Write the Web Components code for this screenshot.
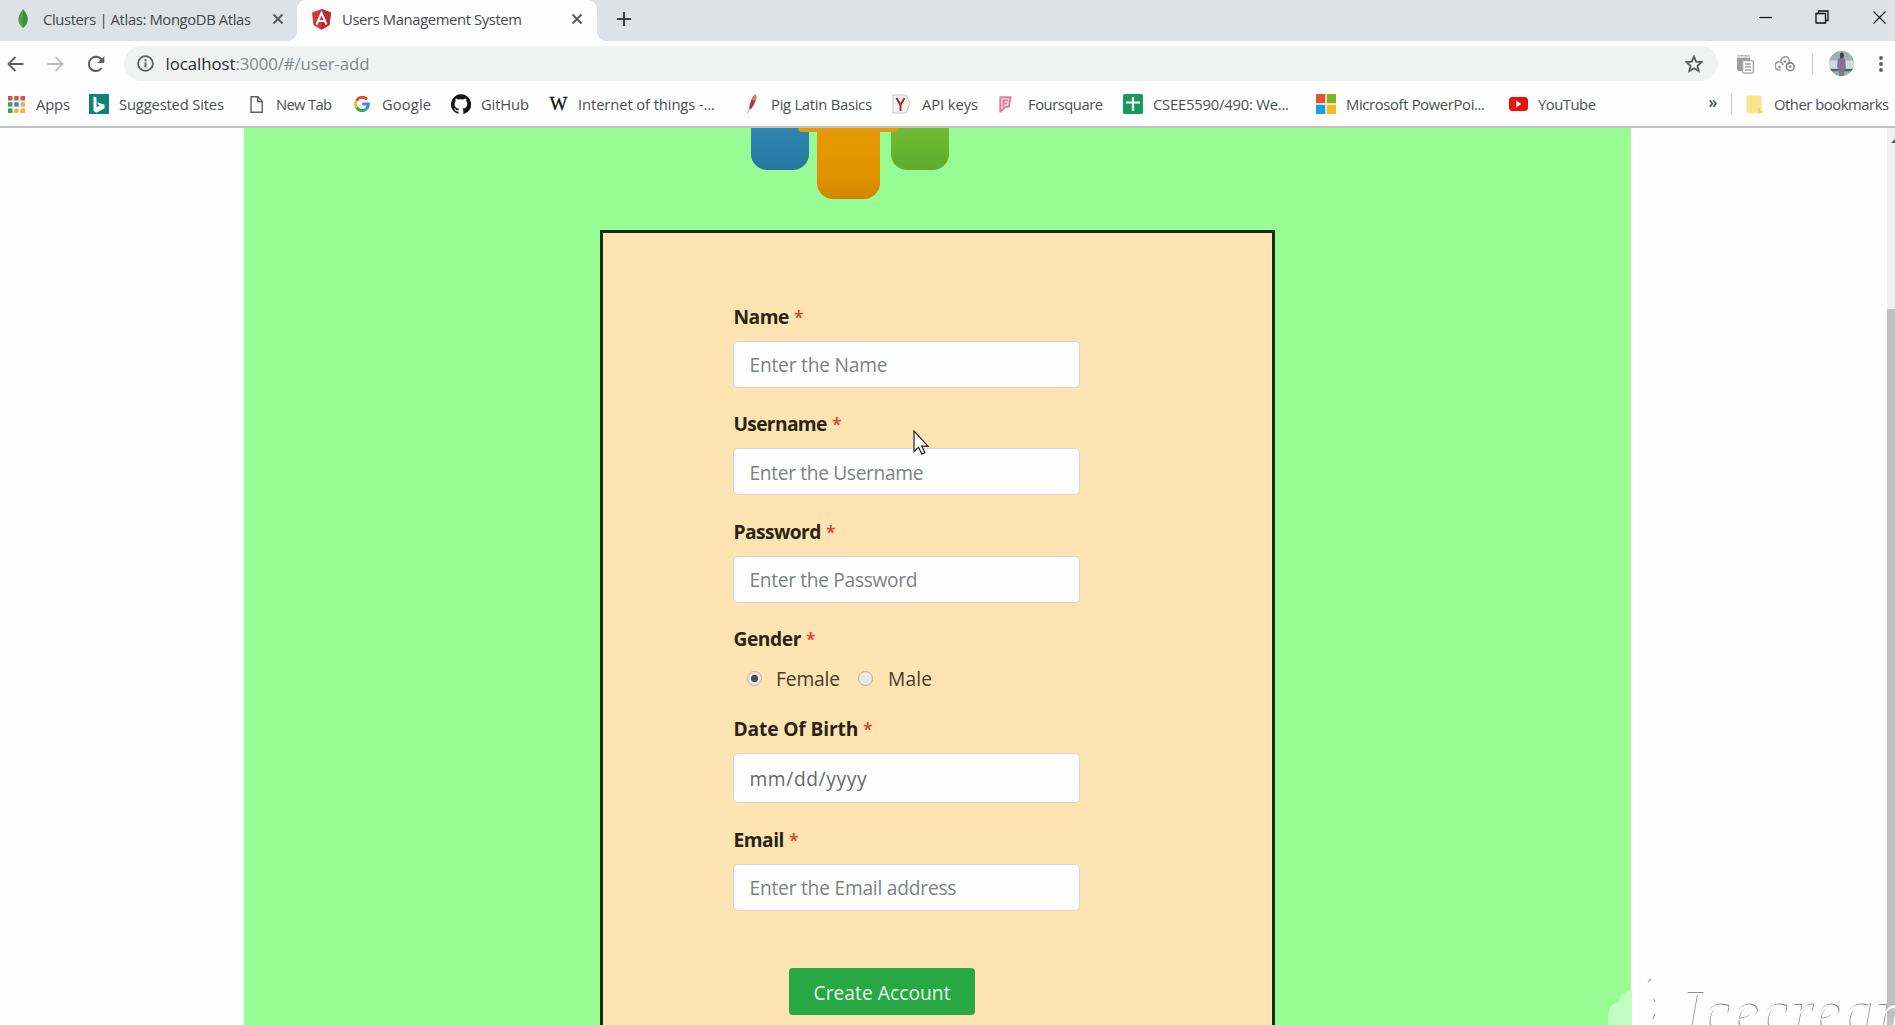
<!DOCTYPE html>
<html lang="en">
<head>
<meta charset="utf-8">
<title>Users Management System</title>
<style>
html,body{margin:0;height:100%;overflow:hidden;background:#fefefe;font-family:"Open Sans","Noto Sans",sans-serif;color:#4b4d50}
browser-window{height:1025px}
</style>
</head>
<body>
<browser-window></browser-window>
<script>
const define = (name, html, ready) => customElements.define(name, class extends HTMLElement {
  connectedCallback() {
    if (this.shadowRoot) return;
    const root = this.attachShadow({ mode: 'open' });
    const t = document.createElement('template');
    t.innerHTML = typeof html === 'function' ? html(this) : html;
    root.append(t.content.cloneNode(true));
    if (ready) ready(this, root);
  }
});

/* A single text line tracked to an exact width (attribute w). */
define('fit-text', el => `<style>
:host{display:block;white-space:pre;width:${el.getAttribute('w')}px;flex:none}
span{display:inline-block;white-space:pre}
</style><span><slot></slot></span>`, (el, root) => {
  const s = root.querySelector('span');
  const n = el.textContent.length;
  const fit = () => {
    s.style.letterSpacing = '0';
    const nat = s.getBoundingClientRect().width;
    s.style.letterSpacing = ((+el.getAttribute('w') - nat) / Math.max(1, n - 1)).toFixed(3) + 'px';
  };
  fit();
  document.fonts.ready.then(fit);
});

const ICONS = {
  leaf: [10,20,`<path d="M5 0C9 5 10 8 9.5 12 9 15 7 17 5 19 3 17 .8 15 .4 12 0 8 2 4 5 0Z" fill="#4aa53f"/><path d="M5 1v18C7 17 9 15 9.5 12 10 8 9 5 5 1Z" fill="#3a8f38"/>`],
  angular: [19,21,`<path d="M9.500 0 19 3.500 17.600 16 9.500 20.800 1.400 16 0 3.500Z" fill="#d8343c"/><path d="M9.500 0 19 3.500 17.600 16 9.500 20.800Z" fill="#b52e31"/><path d="M4.500 15.500 9.500 4l5 11.500M6.500 12h6" fill="none" stroke="#fff" stroke-width="2"/>`],
  close: [12,12,`<path d="M1.500 1.500l9 9M10.500 1.500l-9 9" stroke="#55585b" stroke-width="1.900"/>`],
  plus: [16,16,`<path d="M8 1v14M1 8h14" stroke="#3d4043" stroke-width="2.200"/>`],
  min: [13,13,`<path d="M0 6.500h13" stroke="#111" stroke-width="1.200"/>`],
  max: [14,14,`<path d="M1 3.500h9.500V13H1ZM3.500 3.500V1H13v9.500h-2.500" fill="none" stroke="#111" stroke-width="1.300"/>`],
  wclose: [13,13,`<path d="M.5 .5l12 12M12.500 .5l-12 12" stroke="#111" stroke-width="1.200"/>`],
  back: [17,16,`<path d="M16.500 8H1.500M8.500 1 1.500 8l7 7" fill="none" stroke="#5c5f62" stroke-width="1.900"/>`],
  fwd: [17,16,`<path d="M.5 8h15M8.500 1l7 7-7 7" fill="none" stroke="#babcbe" stroke-width="1.900"/>`],
  reload: [18,18,`<path d="M14.800 13A7.100 7.100 0 1 1 14.500 4.500" fill="none" stroke="#5c5f62" stroke-width="2"/><path d="M17.300 1v7h-7Z" fill="#5c5f62"/>`],
  info: [17,17,`<circle cx="8.500" cy="8.500" r="7.400" fill="none" stroke="#5c5f62" stroke-width="1.800"/><path d="M8.500 7.500v5M8.500 4.200v2" stroke="#5c5f62" stroke-width="2"/>`],
  star: [18,18,`<path d="M9 1.600l2.150 5 5.400.5-4.100 3.600 1.200 5.300L9 13.200 4.350 16l1.200-5.300L1.450 7.100l5.400-.5Z" fill="none" stroke="#55585b" stroke-width="1.800"/>`],
  copy: [18,20,`<path d="M1 3.200Q1 1 3 1h9q2 0 2 2v3H8Q6 6 6 8v9H3q-2 0-2-2Z" fill="#9b9e9e"/><path d="M1 3h13" stroke="#fff" stroke-width="1.200"/><path d="M4 0v2M8 0v2M11 0v2" stroke="#fefefe"/><rect x="6.600" y="6.600" width="10.800" height="12.600" rx="1.500" fill="#fff" stroke="#a2a4a4" stroke-width="1.300"/><path d="M9 10h6M9 13h6M9 16h6" stroke="#a2a4a4" stroke-width="1.500"/>`],
  gears: [20,16,`<g fill="none" stroke="#9a9c9d" stroke-width="1.700"><path d="M5.500 13.500A4 4 0 1 1 8 9"/><path d="M6 5.500A4.200 4.200 0 1 1 12.500 8.500" /><circle cx="15.200" cy="10.700" r="3.900" stroke="#858788"/></g><g fill="#8b8d8e"><circle cx="4.500" cy="11" r="1.300"/><circle cx="9.800" cy="5.500" r="1.300"/><circle cx="15.200" cy="10.700" r="1.400"/></g>`],
  avatar: [25,25,`<defs><clipPath id="c"><circle cx="12.500" cy="12.500" r="12.500"/></clipPath></defs><g clip-path="url(#c)"><path d="M0 0h25v25H0Z" fill="#b9c4c2"/><path d="M0 0h25v9H0Z" fill="#a3b0ad"/><path d="M0 10h25v7H0Z" fill="#d3dad9"/><path d="M0 18h25v2.500H0Z" fill="#3f6e5c"/><path d="M0 20.500h25V25H0Z" fill="#9db0a6"/><path d="M9 8q3.500-2.500 7 0l1 9-1.500 1-.5 7h-5l-.5-7L8 16Z" fill="#83748f"/><ellipse cx="12.800" cy="4.500" rx="2" ry="2.900" fill="#443b45"/></g>`],
  dots: [4,16,`<g fill="#5c5f62"><circle cx="2" cy="2" r="1.900"/><circle cx="2" cy="8" r="1.900"/><circle cx="2" cy="14" r="1.900"/></g>`],
  apps: [17,17,`<g fill="#d2564c"><path d="M0 0h4.500v4.500H0Z"/><path d="M6.200 0h4.500v4.500H6.200Z"/><path d="M12.400 0H17v4.500h-4.600Z"/></g><path d="M0 6.200h4.500v4.500H0Z" fill="#4a9a67"/><path d="M6.200 6.200h4.500v4.500H6.200Z" fill="#3f86d4"/><path d="M12.400 6.200H17v4.500h-4.600Z" fill="#e5b64a"/><path d="M0 12.400h4.500V17H0Z" fill="#4a9a67"/><path d="M6.200 12.400h4.500V17H6.200ZM12.400 12.400H17V17h-4.600Z" fill="#e5b64a"/>`],
  bing: [20,20,`<path d="M0 0h20v20H0Z" fill="#118078"/><path d="M4.500 2.500l3 1v9.800l3.200-1.800-1.500-.8-1-2.500 7.300 2.500v3.500l-8 4.500-3-1.800Z" fill="#fff"/>`],
  page: [13,17,`<path d="M1 .8h6.800L12.200 5.200v11H1ZM7.600 1v4.500h4.500" fill="none" stroke="#5b5e60" stroke-width="1.400"/>`],
  google: [16,16,`<g fill="none" stroke-width="3"><path d="M13 3.400A6.400 6.400 0 0 0 2.500 4.700" stroke="#e54b3c"/><path d="M2.500 4.700a6.400 6.400 0 0 0 0 6.600" stroke="#f4b92a"/><path d="M2.500 11.300a6.400 6.400 0 0 0 9.500 1.900" stroke="#3aa757"/><path d="M12 13.200a6.300 6.300 0 0 0 2.400-5.200H8.200" stroke="#4486ee"/></g>`],
  github: [20,20,`<path fill="#151515" d="M10 .3a10 10 0 0 0-3.200 19.500c.5.100.7-.2.700-.5v-1.900c-2.800.6-3.400-1.200-3.400-1.200-.4-1.100-1.100-1.400-1.100-1.400-.9-.6.1-.6.1-.6 1 .1 1.500 1 1.500 1 .9 1.600 2.400 1.100 2.900.9.100-.7.400-1.100.7-1.300-2.200-.3-4.600-1.100-4.600-5 0-1.100.4-2 1-2.700-.1-.3-.4-1.300.1-2.600 0 0 .8-.3 2.700 1a9.500 9.500 0 0 1 5 0c1.900-1.300 2.700-1 2.700-1 .5 1.300.2 2.300.1 2.600.6.700 1 1.600 1 2.700 0 3.900-2.400 4.700-4.600 5 .4.300.7.900.7 1.900v2.700c0 .3.200.6.700.5A10 10 0 0 0 10 .3Z"/>`],
  feather: [11,20,`<path d="M9.500 0.500q2 3-1 9T3.500 15.500q-1-3 1.500-9T9.500.5Z" fill="#b8394f"/><path d="M9.500.5q2 2 0 6.500L6 5.500Q7.500 1.500 9.500.5Z" fill="#e0883a"/><path d="M4.500 10l-1 5.500 3-2.500Z" fill="#7c3a78"/><path d="M3.500 15L.8 19.500" stroke="#b9a0b4"/>`],
  yahoo: [19,20,`<path d="M1 1h13l4.300 8L14 19H1Z" fill="#f5f3f2" stroke="#c9c7c5" stroke-width="1.100"/><path d="M4.500 4l4 7V17M12.500 4l-4 7" fill="none" stroke="#b3262d" stroke-width="2"/>`],
  four: [13,17,`<path d="M1.300 1.300h10.200l-1.700 9.500H6.600L1.300 15.800Z" fill="#fbdce6" stroke="#e8799b" stroke-width="1.900" stroke-linejoin="round"/><path d="M9 4.300H4.500v6M4.500 7.300H8" stroke="#e8799b" stroke-width="1.800" fill="none"/>`],
  sheets: [20,20,`<rect width="20" height="20" rx="1.800" fill="#16995a"/><path d="M10 3v14M3 8.500h14" stroke="#fff" stroke-width="2.200"/>`],
  ms: [20,20,`<path d="M0 0h9.300v9.300H0Z" fill="#e5532c"/><path d="M10.700 0H20v9.300h-9.300Z" fill="#80b41a"/><path d="M0 10.700h9.300V20H0Z" fill="#17a0de"/><path d="M10.700 10.700H20V20h-9.300Z" fill="#f3be1c"/>`],
  yt: [19,14,`<rect width="19" height="14" rx="3.500" fill="#e8120c"/><path d="M7.200 3.800v6.400L12.500 7Z" fill="#fff"/>`],
  folder: [17,19,`<path d="M2 .5h12q1.500 0 1.500 1.500v10l1 5-2 1.500H2Q.5 18.500.5 17V2Q.5.5 2 .5Z" fill="#fae38b"/><path d="M13 13v4h3.500" fill="none" stroke="#e6c45f" stroke-width="1.200"/>`],
  cursor: [17,26,`<path d="M1 1v20.500l4.500-4.200 3.400 6.800 3-1.400-3.200-6.600H15Z" fill="#fff" stroke="#222" stroke-width="1.200"/>`]
};
define('ui-icon', el => {
  const [w, h, body] = ICONS[el.getAttribute('name')];
  return `<style>:host{display:block;flex:none;width:${w}px;height:${h}px}svg{display:block}</style><svg width="${w}" height="${h}" viewBox="0 0 ${w} ${h}">${body}</svg>`;
});

define('tab-strip', `<style>
:host{display:flex;height:41px;background:#dee1e5;color:#45484b;font-size:14.800px;line-height:22px}
.t{display:flex;align-items:center;box-sizing:border-box;padding-bottom:3px;flex:none}
.one{width:297px;padding-left:18px}
.one fit-text{margin-left:15px}.one ui-icon:last-child{margin-left:21px}
.two{width:300px;padding-left:15px;background:#fefefe;border-radius:9px 9px 0 0;color:#45484b;position:relative}
.two:before,.two:after{content:"";position:absolute;bottom:0;width:9px;height:9px}
.two:before{left:-9px;background:radial-gradient(circle at 0 0,transparent 8.500px,#fefefe 9px)}
.two:after{right:-9px;background:radial-gradient(circle at 100% 0,transparent 8.500px,#fefefe 9px)}
.two fit-text{margin-left:11px}.two ui-icon:last-child{margin-left:49px}
.add{padding-left:19px}
.win{margin-left:auto;gap:43px;padding:0 9px 7px 0}
.win ui-icon+ui-icon+ui-icon{margin-left:1px}
</style>
<div class="t one"><ui-icon name="leaf"></ui-icon><fit-text w="208">Clusters | Atlas: MongoDB Atlas</fit-text><ui-icon name="close"></ui-icon></div>
<div class="t two"><ui-icon name="angular"></ui-icon><fit-text w="180">Users Management System</fit-text><ui-icon name="close"></ui-icon></div>
<div class="t add"><ui-icon name="plus"></ui-icon></div>
<div class="t win"><ui-icon name="min"></ui-icon><ui-icon name="max"></ui-icon><ui-icon name="wclose"></ui-icon></div>`);

define('tool-bar', `<style>
:host{display:flex;height:45px;align-items:center;padding:0 12.500px 0 7px;box-sizing:border-box;background:#fefefe}
ui-icon.f{margin-left:23px}ui-icon.r{margin:0 19px 0 22.500px}
.omni{flex:1;height:35px;border-radius:18px;background:#f0f2f2;display:flex;align-items:center;padding:0 15px 0 13px;font-size:16.800px;line-height:24px;color:#858889}
.omni fit-text:nth-of-type(1){margin-left:12px;color:#26282a}
.omni ui-icon:last-child{margin-left:auto}
.a{margin-left:18.500px}.b{margin-left:21px}
i{width:1px;height:20px;background:#c6c8c9;margin:0 15.500px 0 17px}
.d{margin-left:25px}
</style>
<ui-icon name="back"></ui-icon><ui-icon name="fwd" class="f"></ui-icon><ui-icon name="reload" class="r"></ui-icon>
<div class="omni"><ui-icon name="info"></ui-icon><fit-text w="70">localhost</fit-text><fit-text w="134">:3000/#/user-add</fit-text><ui-icon name="star"></ui-icon></div>
<ui-icon name="copy" class="a"></ui-icon><ui-icon name="gears" class="b"></ui-icon><i></i><ui-icon name="avatar"></ui-icon><ui-icon name="dots" class="d"></ui-icon>`);

define('bookmark-item', el => {
  const g = k => el.getAttribute(k);
  return `<style>:host{display:flex;align-items:center;flex:none;margin-left:${g('before')}px}
fit-text{margin-left:${g('gap')}px}
b{font:400 19px/20px "Liberation Serif",serif;color:#111;width:19px;text-align:center;-webkit-text-stroke:.3px #111}</style>
${g('icon') === 'wiki' ? '<b>W</b>' : `<ui-icon name="${g('icon')}"></ui-icon>`}<fit-text w="${g('w')}">${el.dataset.label}</fit-text>`;
});

const MARKS = [
  ['apps',8,11,'Apps',34],['bing',19,10,'Suggested Sites',105],['page',26,13,'New Tab',56],
  ['google',22,12,'Google',49],['github',20,10,'GitHub',48],['wiki',20,10,'Internet of things -...',137],
  ['feather',31,14,'Pig Latin Basics',101],['yahoo',20,11,'API keys',56],['four',21,16,'Foursquare',75],
  ['sheets',20,10,'CSEE5590/490: We...',136],['ms',27,10,'Microsoft PowerPoi...',139],['yt',24,10,'YouTube',58]
];
define('bookmark-bar', () => `<style>
:host{display:flex;height:42px;box-sizing:border-box;padding:0 6px 4px 0;align-items:center;background:#fefefe;border-bottom:2px solid #bfc2c1;font-size:14.800px;line-height:22px;color:#4b4e50}
.more{margin-left:auto;font-size:16px;font-weight:600;margin-top:-4px}
i{width:1px;height:20px;background:#c6c8c9;margin-left:13px}
</style>${MARKS.map(m => `<bookmark-item icon="${m[0]}" before="${m[1]}" gap="${m[2]}" data-label="${m[3]}" w="${m[4]}"></bookmark-item>`).join('')}
<fit-text class="more" w="9">»</fit-text><i></i><bookmark-item icon="folder" before="14" gap="11.5" data-label="Other bookmarks" w="115"></bookmark-item>`);

define('form-label', el => `<style>
:host{display:flex;gap:4.700px;height:39.200px;line-height:30px;font-size:19.200px;font-weight:700;color:#2b2414;padding-left:.4px}
em{font-style:normal;font-weight:600;font-size:17.500px;color:#e23a2c}
</style><fit-text w="${el.getAttribute('w')}">${el.textContent}</fit-text><em>*</em>`);

define('text-field', el => `<style>
:host{display:block;margin-bottom:${el.getAttribute('after') || 21.4}px}
.box{box-sizing:border-box;width:347px;height:${el.getAttribute('h') || 47}px;border:1px solid #d3d8d6;border-radius:5px;background:#fefefe;display:flex;align-items:center;padding:1.500px 0 0 15.500px;font-size:19.200px;line-height:30px;color:${el.getAttribute('ink') || '#7c8283'}}
</style><form-label w="${el.getAttribute('lw')}">${el.getAttribute('label')}</form-label>
<div class="box"><fit-text w="${el.getAttribute('w')}">${el.getAttribute('hint')}</fit-text></div>`);

define('gender-field', `<style>
:host{display:block;margin-bottom:20.800px}
.row{display:flex;align-items:center;height:30px;line-height:30px;font-size:19.200px;color:#453c2b;padding:1.200px 0 0 13.500px;box-sizing:border-box}
i{box-sizing:border-box;width:15px;height:15px;border:1px solid #b3b0a9;border-radius:50%;background:#e9e9e6;margin-bottom:2px;flex:none}
i.on{background:radial-gradient(circle,#4e4e4e 3.300px,#e9e9e6 4px)}
fit-text{margin-left:14.500px}fit-text+i{margin-left:17.500px}
</style><form-label w="68">Gender</form-label>
<div class="row"><i class="on"></i><fit-text w="64">Female</fit-text><i></i><fit-text w="44" style="margin-left:15.500px">Male</fit-text></div>`);

define('account-form', `<style>
:host{display:block;box-sizing:border-box;width:675px;height:860px;margin:0 auto;border:3px solid #12300f;background:#fde4b2;padding:69px 0 0 130px}
.btn{margin:57.500px 0 0 56px;width:186px;height:47px;border-radius:4px;background:#28a745;color:#ecfbe9;display:flex;align-items:center;justify-content:center;font-size:19.200px;line-height:30px;padding-top:2.500px;box-sizing:border-box}
</style>
<text-field label="Name" lw="56" hint="Enter the Name" w="138"></text-field>
<text-field label="Username" lw="94" hint="Enter the Username" w="174"></text-field>
<text-field label="Password" lw="88" hint="Enter the Password" w="168"></text-field>
<gender-field></gender-field>
<text-field label="Date Of Birth" lw="125" hint="mm/dd/yyyy" w="117" h="50" ink="#66696a" after="21.2"></text-field>
<text-field label="Email" lw="51" hint="Enter the Email address" w="207" after="0"></text-field>
<div class="btn"><fit-text w="137">Create Account</fit-text></div>`);

define('team-logo', `<style>
:host{display:flex;align-items:flex-start;height:101.500px;padding-left:507px}
div{border-radius:0 0 16px 16px;flex:none}
.b{width:58px;height:42px;background:linear-gradient(#2f86b0,#2777a0)}
.o{width:63px;height:71px;margin-left:8px;background:linear-gradient(#e69a00,#e09200 70%,#d38500);position:relative}
.o:before{content:"";position:absolute;left:-19px;right:-19px;top:0;height:4px;background:#e39a10;border-radius:0 0 12px 12px}
.g{width:58px;height:42px;margin-left:11px;background:linear-gradient(#72bb31,#5fab30)}
</style><div class="b"></div><div class="o"></div><div class="g"></div>`);

define('cloud-mark', `<style>
:host{display:block}
svg{position:absolute;left:1600px;top:975px}
fit-text{position:absolute;left:1680px;top:982px;font:italic 400 60px/60px "Liberation Serif",serif;color:#fefefe;text-shadow:1px -1.200px 0 #8b8e8c}
</style><svg width="60" height="50"><path d="M8 50V42Q8 29 19 27 21 16 32 15V50Z" fill="#c2fcc0"/><path d="M48 7l3-3M54 24l1 3M55 39l-2 5" stroke="#9fa2a0" stroke-width="1.200"/></svg><fit-text w="238">Icecream</fit-text>`);

define('browser-window', `<style>
:host{display:flex;flex-direction:column;width:1895px;overflow:hidden;position:relative}
.view{flex:1;min-height:0;display:flex;overflow:hidden}
.main{flex:1;padding:0 256px 0 244px;overflow:hidden}
.green{height:1000px;background:#98fc95}
.bar{width:8px;background:#f0f1f0;box-sizing:border-box;padding-top:181px;position:relative}
.bar div{height:720px;background:#bfc2c0}
.bar:before{content:"";position:absolute;right:-4px;top:11px;border:4px solid transparent;border-top:0;border-bottom:4px solid #555}
.cur{position:absolute;left:913px;top:430px}
</style>
<tab-strip></tab-strip><tool-bar></tool-bar><bookmark-bar></bookmark-bar>
<div class="view"><div class="main"><div class="green"><team-logo></team-logo><account-form></account-form></div></div><div class="bar"><div></div></div></div>
<cloud-mark></cloud-mark><ui-icon name="cursor" class="cur"></ui-icon>`);
</script>
</body>
</html>
